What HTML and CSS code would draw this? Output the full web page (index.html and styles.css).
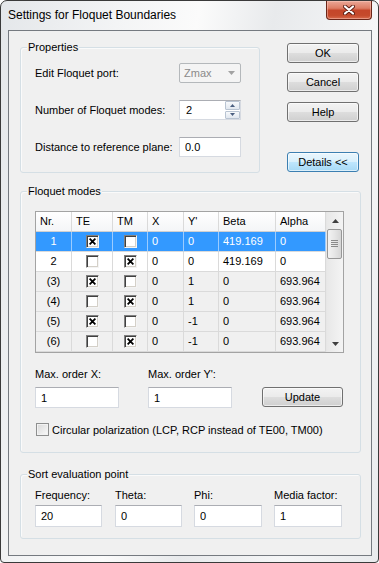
FILE: index.html
```html
<!DOCTYPE html>
<html lang="en">
<head>
    <meta charset="UTF-8">
    <title>Settings for Floquet Boundaries</title>
    <link rel="stylesheet" href="styles.css">
</head>
<body>
    <div class="window">
        <div class="titlebar">
            <span class="title">Settings for Floquet Boundaries</span>
            <div class="close">
                <svg width="12" height="10" viewBox="0 0 12 10">
                    <path d="M2 1.5L10 8.5M10 1.5L2 8.5" stroke="#5b1c12" stroke-width="4" stroke-linecap="round"/>
                    <path d="M2 1.5L10 8.5M10 1.5L2 8.5" stroke="#fff" stroke-width="2.2" stroke-linecap="round"/>
                </svg>
            </div>
        </div>

        <div class="client">
            <div class="top">
                <div class="group props">
                    <span class="group-title">Properties</span>
                    <div class="prop-row">
                        <span class="prop-label">Edit Floquet port:</span>
                        <div class="combo">
                            <span>Zmax</span>
                            <svg width="7" height="4" viewBox="0 0 7 4"><path d="M0 0H7L3.5 4Z" fill="#a2a2a2"/></svg>
                        </div>
                    </div>
                    <div class="prop-row">
                        <span class="prop-label">Number of Floquet modes:</span>
                        <div class="spin">
                            <input class="spin-input" type="text" value="2">
                            <div class="spin-btns">
                                <span class="spin-btn"><svg width="5" height="3" viewBox="0 0 5 3"><path d="M0 3L2.5 0L5 3Z" fill="#4b5f80"/></svg></span>
                                <span class="spin-btn"><svg width="5" height="3" viewBox="0 0 5 3"><path d="M0 0H5L2.5 3Z" fill="#4b5f80"/></svg></span>
                            </div>
                        </div>
                    </div>
                    <div class="prop-row">
                        <span class="prop-label">Distance to reference plane:</span>
                        <input class="field prop-field" type="text" value="0.0">
                    </div>
                </div>

                <div class="buttons">
                    <button class="btn">OK</button>
                    <button class="btn">Cancel</button>
                    <button class="btn">Help</button>
                    <button class="btn btn-default">Details &lt;&lt;</button>
                </div>
            </div>

            <div class="group floquet">
                <span class="group-title">Floquet modes</span>
                <div class="grid-box">
                    <div class="modes">
                        <div class="row head">
                            <div>Nr.</div><div>TE</div><div>TM</div><div>X</div><div>Y'</div><div>Beta</div><div>Alpha</div>
                        </div>
                        <div class="row sel">
                            <div class="nr">1</div>
                            <div class="box"><span class="cb"><svg width="7" height="7" viewBox="0 0 7 7"><path d="M0.6 0.6L6.4 6.4M6.4 0.6L0.6 6.4" stroke="#000" stroke-width="1.8"/></svg></span></div>
                            <div class="box"><span class="cb"></span></div>
                            <div>0</div><div>0</div><div>419.169</div><div>0</div>
                        </div>
                        <div class="row">
                            <div class="nr">2</div>
                            <div class="box"><span class="cb"></span></div>
                            <div class="box"><span class="cb"><svg width="7" height="7" viewBox="0 0 7 7"><path d="M0.6 0.6L6.4 6.4M6.4 0.6L0.6 6.4" stroke="#000" stroke-width="1.8"/></svg></span></div>
                            <div>0</div><div>0</div><div>419.169</div><div>0</div>
                        </div>
                        <div class="row ev">
                            <div class="nr">(3)</div>
                            <div class="box"><span class="cb"><svg width="7" height="7" viewBox="0 0 7 7"><path d="M0.6 0.6L6.4 6.4M6.4 0.6L0.6 6.4" stroke="#000" stroke-width="1.8"/></svg></span></div>
                            <div class="box"><span class="cb"></span></div>
                            <div>0</div><div>1</div><div>0</div><div>693.964</div>
                        </div>
                        <div class="row ev">
                            <div class="nr">(4)</div>
                            <div class="box"><span class="cb"></span></div>
                            <div class="box"><span class="cb"><svg width="7" height="7" viewBox="0 0 7 7"><path d="M0.6 0.6L6.4 6.4M6.4 0.6L0.6 6.4" stroke="#000" stroke-width="1.8"/></svg></span></div>
                            <div>0</div><div>1</div><div>0</div><div>693.964</div>
                        </div>
                        <div class="row ev">
                            <div class="nr">(5)</div>
                            <div class="box"><span class="cb"><svg width="7" height="7" viewBox="0 0 7 7"><path d="M0.6 0.6L6.4 6.4M6.4 0.6L0.6 6.4" stroke="#000" stroke-width="1.8"/></svg></span></div>
                            <div class="box"><span class="cb"></span></div>
                            <div>0</div><div>-1</div><div>0</div><div>693.964</div>
                        </div>
                        <div class="row ev">
                            <div class="nr">(6)</div>
                            <div class="box"><span class="cb"></span></div>
                            <div class="box"><span class="cb"><svg width="7" height="7" viewBox="0 0 7 7"><path d="M0.6 0.6L6.4 6.4M6.4 0.6L0.6 6.4" stroke="#000" stroke-width="1.8"/></svg></span></div>
                            <div>0</div><div>-1</div><div>0</div><div>693.964</div>
                        </div>
                    </div>
                    <div class="vscroll">
                        <div class="sb-btn"><svg width="7" height="4" viewBox="0 0 7 4"><path d="M0 4L3.5 0L7 4Z" fill="#3f3f3f"/></svg></div>
                        <div class="thumb">
                            <svg width="7" height="8" viewBox="0 0 7 8"><path d="M0 0.5H7M0 2.5H7M0 4.5H7M0 6.5H7" stroke="#8a8a8a" stroke-width="1"/></svg>
                        </div>
                        <div class="sb-track"></div>
                        <div class="sb-btn"><svg width="7" height="4" viewBox="0 0 7 4"><path d="M0 0H7L3.5 4Z" fill="#3f3f3f"/></svg></div>
                    </div>
                </div>

                <div class="orders">
                    <div class="order">
                        <span class="field-label">Max. order X:</span>
                        <input class="field order-field" type="text" value="1">
                    </div>
                    <div class="order order-y">
                        <span class="field-label">Max. order Y':</span>
                        <input class="field order-field" type="text" value="1">
                    </div>
                    <button class="btn btn-update">Update</button>
                </div>

                <div class="check-row">
                    <span class="check"></span>
                    <span>Circular polarization (LCP, RCP instead of TE00, TM00)</span>
                </div>
            </div>

            <div class="group sort">
                <span class="group-title">Sort evaluation point</span>
                <div class="sort-row">
                    <div class="sort-col col-freq">
                        <span class="field-label">Frequency:</span>
                        <input class="field sort-field" type="text" value="20">
                    </div>
                    <div class="sort-col col-theta">
                        <span class="field-label">Theta:</span>
                        <input class="field sort-field" type="text" value="0">
                    </div>
                    <div class="sort-col col-phi">
                        <span class="field-label">Phi:</span>
                        <input class="field sort-field" type="text" value="0">
                    </div>
                    <div class="sort-col col-media">
                        <span class="field-label">Media factor:</span>
                        <input class="field sort-field" type="text" value="1">
                    </div>
                </div>
            </div>
        </div>
    </div>
</body>
</html>
```

FILE: styles.css
```css
* {
    box-sizing: border-box;
}

body {
    margin: 0;
    font-family: "Liberation Sans", Arial, sans-serif;
    font-size: 11px;
    color: #000;
    background: #fff;
}

/* window frame */
.window {
    width: 379px;
    height: 563px;
    display: flex;
    flex-direction: column;
    padding: 0 6px 6px 7px;
    border: 1px solid #3a3a3a;
    border-radius: 7px 7px 4px 4px;
    background: linear-gradient(100deg, #e4e7ea 0%, #f3f4f5 25%, #fbfbfb 42%, #e8eaec 58%, #f5f6f7 80%, #e9ebed 100%);
}

.titlebar {
    height: 29px;
    display: flex;
    justify-content: space-between;
    align-items: flex-start;
}

.title {
    margin-top: 8px;
    font-size: 12px;
    line-height: 12px;
}

.close {
    width: 46px;
    height: 19px;
    display: flex;
    align-items: center;
    justify-content: center;
    border: 1px solid #6b2619;
    border-top: none;
    border-radius: 0 0 4px 4px;
    background: linear-gradient(#eaa797 0%, #dd7d65 40%, #c5462a 52%, #c54a2c 80%, #d86a4c 100%);
    box-shadow: inset 0 0 0 1px rgba(255, 210, 200, 0.45);
}

.client {
    flex: 1;
    padding-left: 11px;
    border: 1px solid #757a80;
    background: #f0f0f0;
}

/* group boxes */
.group {
    position: relative;
    border: 1px solid #d5dfe5;
    border-radius: 3px;
    box-shadow: inset 1px 1px 0 #fafafa;
}

.group-title {
    position: absolute;
    top: -7px;
    left: 6px;
    padding: 0 1px;
    line-height: 13px;
    background: #f0f0f0;
}

.top {
    display: flex;
    align-items: flex-start;
}

.props {
    width: 240px;
    height: 126px;
    margin-top: 16px;
    padding: 15px 0 0 14px;
}

.prop-row {
    display: flex;
    align-items: center;
    height: 20px;
    margin-bottom: 17px;
}

.prop-label {
    width: 144px;
}

/* inputs */
.field {
    height: 21px;
    padding: 0 5px;
    border: 1px solid #d6dae1;
    border-top-color: #abadb3;
    background: #fff;
    font: inherit;
    color: #000;
    outline: none;
}

.prop-field {
    width: 62px;
    height: 20px;
}

.combo {
    width: 62px;
    height: 20px;
    display: flex;
    align-items: center;
    justify-content: space-between;
    padding: 0 5px 0 4px;
    border: 1px solid #b4b8bb;
    border-radius: 2px;
    background: #f4f4f4;
    color: #8a8a8a;
}

.spin {
    width: 62px;
    height: 20px;
    display: flex;
    border: 1px solid #d6dae1;
    border-top-color: #abadb3;
    background: #fff;
}

.spin-input {
    flex: 1;
    min-width: 0;
    padding: 0 0 0 6px;
    border: none;
    font: inherit;
    outline: none;
}

.spin-btns {
    width: 15px;
    display: flex;
    flex-direction: column;
    gap: 1px;
}

.spin-btn {
    flex: 1;
    display: flex;
    align-items: center;
    justify-content: center;
    border: 1px solid #b9c4d2;
    border-radius: 1px;
    background: linear-gradient(#f7f9fb, #e1e7ef);
}

/* buttons */
.buttons {
    display: flex;
    flex-direction: column;
    margin: 12px 0 0 27px;
}

.btn {
    width: 72px;
    height: 20px;
    padding: 0;
    border: 1px solid #707070;
    border-radius: 3px;
    background: linear-gradient(#f3f3f3 0%, #ebebeb 48%, #dddddd 52%, #cfcfcf 100%);
    box-shadow: inset 0 0 0 1px rgba(255, 255, 255, 0.6);
    font: inherit;
    color: #000;
}

.btn + .btn {
    margin-top: 9px;
}

.btn:nth-child(3) {
    margin-top: 10px;
}

.buttons .btn-default {
    margin-top: 30px;
    border-color: #3c7fb1;
    background: linear-gradient(#eaf6fd 0%, #d9f0fc 48%, #bee6fd 52%, #a7d9f5 100%);
}

/* Floquet modes */
.floquet {
    width: 341px;
    height: 262px;
    margin-top: 18px;
    padding: 19px 0 0 14px;
}

.grid-box {
    width: 309px;
    height: 142px;
    display: flex;
    border: 1px solid #a3a3a3;
    background: #fff;
    overflow: hidden;
}

.modes {
    width: 290px;
    display: grid;
    grid-template-columns: 36px 41px 35px 36px 35px 57px 50px;
    grid-auto-rows: 20px;
    align-content: start;
}

.row {
    display: contents;
}

.row > div {
    padding-left: 4px;
    border-right: 1px solid #dadada;
    border-bottom: 1px solid #dadada;
    line-height: 19px;
    white-space: nowrap;
    overflow: hidden;
}

.head > div {
    background: linear-gradient(#ffffff, #f4f5f7);
    border-bottom-color: #d0d0d0;
}

.row > .nr {
    padding-left: 0;
    text-align: center;
}

.row > .box {
    display: flex;
    align-items: center;
    justify-content: center;
    padding-left: 0;
}

.sel > div {
    background: #3399ff;
    color: #fff;
    border-right-color: #9cccff;
}

.ev > div {
    background: #f0f0f0;
}

.cb {
    width: 13px;
    height: 13px;
    display: flex;
    align-items: center;
    justify-content: center;
    border: 1px solid;
    border-color: #808080 #f4f4f4 #f4f4f4 #808080;
    box-shadow: inset 1px 1px 0 #404040, inset -1px -1px 0 #d4d0c8;
    background: #fff;
}

.vscroll {
    width: 17px;
    display: flex;
    flex-direction: column;
    border-left: 1px solid #e6e6e6;
    background: linear-gradient(to right, #e8e8e8, #f4f4f4);
}

.sb-btn {
    height: 17px;
    display: flex;
    align-items: center;
    justify-content: center;
}

.thumb {
    height: 30px;
    margin: 0 1px 0 0;
    display: flex;
    align-items: center;
    justify-content: center;
    border: 1px solid #979797;
    border-radius: 2px;
    background: linear-gradient(to right, #f3f3f3, #e6e6e6 50%, #d6d6d6);
}

.sb-track {
    flex: 1;
}

.orders {
    display: flex;
    align-items: flex-end;
    margin-top: 15px;
}

.order, .sort-col {
    display: flex;
    flex-direction: column;
}

.field-label {
    line-height: 13px;
}

.order-field {
    width: 84px;
    margin-top: 6px;
}

.order-y {
    margin-left: 29px;
}

.orders .btn-update {
    width: 81px;
    margin: 0 0 1px 30px;
}

.check-row {
    display: flex;
    align-items: center;
    margin-top: 15px;
}

.check {
    width: 13px;
    height: 13px;
    margin: 0 3px 0 1px;
    border: 1px solid #8e8f8f;
    background: linear-gradient(135deg, #d8d8d8, #fafafa);
    box-shadow: inset 0 0 0 1px #f2f2f2;
}

/* sort evaluation point */
.sort {
    width: 341px;
    height: 65px;
    margin-top: 21px;
    padding: 14px 0 0 14px;
}

.sort-row {
    display: flex;
}

.sort-field {
    height: 22px;
    margin-top: 3px;
}

.col-freq .sort-field, .col-theta .sort-field {
    width: 67px;
}

.col-phi .sort-field, .col-media .sort-field {
    width: 68px;
}

.col-theta {
    margin-left: 13px;
}

.col-phi, .col-media {
    margin-left: 12px;
}
```
